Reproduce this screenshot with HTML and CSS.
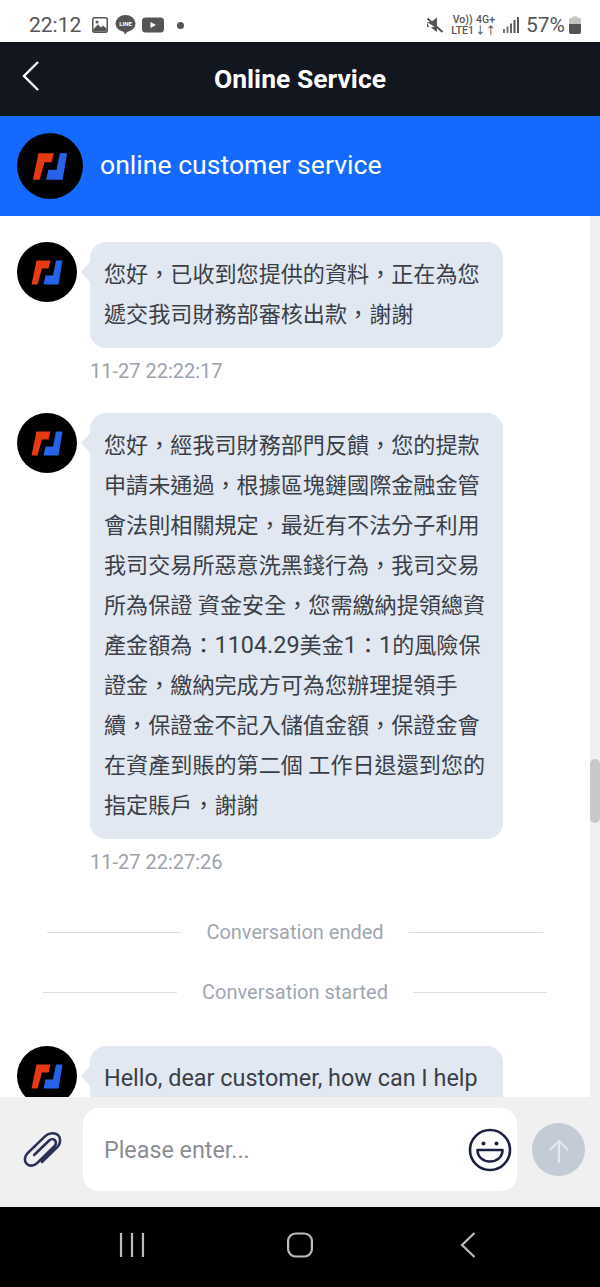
FILE: index.html
```html
<!DOCTYPE html>
<html lang="en">

<head>
    <meta charset="UTF-8">
    <meta name="viewport" content="width=device-width, initial-scale=1.0">
    <title>Online Service</title>
    <link rel="stylesheet" href="styles.css">
</head>

<body>
    <svg class="defs" width="0" height="0">
        <symbol id="logo" viewBox="0 0 60 60">
            <circle cx="30" cy="30" r="30" fill="#000"/>
            <path d="M19.500 18.500H33.500L31.500 26.500H25L20.500 42.500H14.500Z" fill="#e63a12"/>
            <path d="M39 18.500H45.500L41.500 42.500H26.500L28.500 33.500H36Z" fill="#2563eb"/>
        </symbol>
    </svg>

    <div class="status-bar">
        <div class="status-left">
            <span class="clock">22:12</span>
            <svg class="status-icon" width="18" height="18" viewBox="0 0 18 18">
                <rect x="1" y="1" width="16" height="16" rx="2.500" fill="#555"/>
                <rect x="2.500" y="2.500" width="13" height="13" rx="1" fill="#fff"/>
                <path d="M2.500 13L7 8.500L10 11.500L12 9.500L15.500 12.500V15.500H2.500Z" fill="#555"/>
                <circle cx="6" cy="6" r="1.500" fill="#555"/>
            </svg>
            <svg class="status-icon" width="21" height="20" viewBox="0 0 21 20">
                <ellipse cx="10.500" cy="8.500" rx="10" ry="8.500" fill="#555"/>
                <path d="M8 15H14L10 19.500Z" fill="#555"/>
                <text x="10.500" y="10.500" class="line-label">LINE</text>
            </svg>
            <svg class="status-icon" width="22" height="16" viewBox="0 0 22 16">
                <rect x="0" y="0.500" width="22" height="15" rx="3.500" fill="#555"/>
                <path d="M8.500 5L14 8L8.500 11Z" fill="#fff"/>
            </svg>
            <span class="status-dot"></span>
        </div>
        <div class="status-right">
            <svg width="18" height="18" viewBox="0 0 18 18">
                <path d="M1 6H5L11 1.500V12.500M1 6V11H3" fill="#555"/>
                <path d="M5 11.500L11 16V10Z" fill="#555"/>
                <path d="M1.500 2.500L16.500 16" stroke="#555" stroke-width="2" fill="none"/>
            </svg>
            <div class="net-label net-label-vo">
                <span>Vo))</span>
                <span>LTE1</span>
            </div>
            <div class="net-label">
                <span>4G+</span>
                <span>↓↑</span>
            </div>
            <svg width="16" height="16" viewBox="0 0 16 16">
                <rect x="0" y="12" width="2" height="4" fill="#777"/>
                <rect x="3.500" y="9.500" width="2" height="6.500" fill="#777"/>
                <rect x="7" y="6.500" width="2" height="9.500" fill="#666"/>
                <rect x="10.500" y="3" width="2" height="13" fill="#555"/>
                <rect x="14" y="0" width="2" height="16" fill="#555"/>
            </svg>
            <span class="battery-pct">57%</span>
            <svg width="12" height="18" viewBox="0 0 12 18">
                <path d="M3.500 0.500H8.500V2H10.500Q12 2 12 3.500V8H0V3.500Q0 2 1.500 2H3.500Z" fill="#c4c4c4"/>
                <path d="M0 8H12V16Q12 18 10 18H2Q0 18 0 16Z" fill="#555"/>
            </svg>
        </div>
    </div>

    <header class="header">
        <svg class="back" width="20" height="32" viewBox="0 0 20 32">
            <path d="M17 2L3 16L17 30" stroke="#fff" stroke-width="2.400" fill="none"/>
        </svg>
        <h1>Online Service</h1>
    </header>

    <div class="agent-bar">
        <svg class="agent-logo" width="66" height="66"><use href="#logo"/></svg>
        <span class="agent-name">online customer service</span>
    </div>

    <div class="chat">
        <div class="messages">
            <div class="message">
                <div class="message-row">
                    <svg class="avatar" width="60" height="60"><use href="#logo"/></svg>
                    <div class="bubble">您好，已收到您提供的資料，正在為您遞交我司財務部審核出款，謝謝</div>
                </div>
                <div class="time">11-27 22:22:17</div>
            </div>

            <div class="message">
                <div class="message-row">
                    <svg class="avatar" width="60" height="60"><use href="#logo"/></svg>
                    <div class="bubble">
                        <div>您好，經我司財務部門反饋，您的提款申請未通過，根據區塊鏈國際金融金管會法則相關規定，最近有不法分子利用我司交易所惡意洗黑錢行為，我司交易所為保證 資金安全，您需繳納提領總資</div>
                        <div>產金額為：<span class="latin">1104.29</span>美金<span class="latin">1</span>：<span class="latin">1</span>的風險保</div>
                        <div>證金，繳納完成方可為您辦理提領手續，保證金不記入儲值金額，保證金會在資產到賬的第二個 工作日退還到您的指定賬戶，謝謝</div>
                    </div>
                </div>
                <div class="time">11-27 22:27:26</div>
            </div>

            <div class="divider divider-ended"><span>Conversation ended</span></div>
            <div class="divider divider-started"><span>Conversation started</span></div>

            <div class="message">
                <div class="message-row">
                    <svg class="avatar" width="60" height="60"><use href="#logo"/></svg>
                    <div class="bubble"><span class="latin">Hello, dear customer, how can I help</span></div>
                </div>
            </div>
        </div>
        <div class="scroll-track"><div class="scroll-thumb"></div></div>
    </div>

    <div class="input-bar">
        <svg class="clip" width="41" height="37" viewBox="0 0 44 40">
            <path d="M14 25L30 9.500C32 7.500 35 7.500 36.500 9C38 10.500 38 13.500 36 15.500L17.500 33.500C14 37 9 37.500 6 34.500C3 31.500 3.500 26.500 7 23L26 4.500C30 .5 37 .5 40 3.500C43 6.500 43 12.500 39 16.500L22.500 32.500" transform="translate(0 1)" stroke="#2b3155" stroke-width="2.800" fill="none" stroke-linecap="round"/>
        </svg>
        <div class="input-box">
            <span class="placeholder">Please enter...</span>
            <svg width="44" height="44" viewBox="0 0 44 44">
                <circle cx="22" cy="22" r="20" stroke="#1c2140" stroke-width="2.600" fill="none"/>
                <circle cx="15.500" cy="15.500" r="2" fill="#1c2140"/>
                <circle cx="28.500" cy="15.500" r="2" fill="#1c2140"/>
                <path d="M9.500 22H34.500C34.500 29 29 33.500 22 33.500C15 33.500 9.500 29 9.500 22Z" stroke="#1c2140" stroke-width="2.600" fill="none" stroke-linejoin="round"/>
            </svg>
        </div>
        <div class="send">
            <svg width="20" height="25" viewBox="0 0 20 25">
                <path d="M10 24V2M1 11L10 2L19 11" stroke="#e4e8ec" stroke-width="2.200" fill="none"/>
            </svg>
        </div>
    </div>

    <nav class="nav-bar">
        <svg width="26" height="26" viewBox="0 0 26 26">
            <path d="M2 1V25M13 1V25M24 1V25" stroke="#bdbdbd" stroke-width="2.200"/>
        </svg>
        <svg class="nav-home" width="26" height="26" viewBox="0 0 26 26">
            <rect x="1.100" y="1.500" width="23.800" height="23" rx="7.500" stroke="#bdbdbd" stroke-width="2.200" fill="none"/>
        </svg>
        <svg width="18" height="28" viewBox="0 0 18 28">
            <path d="M15.500 2L3 14L15.500 26" stroke="#bdbdbd" stroke-width="2.200" fill="none"/>
        </svg>
    </nav>
</body>

</html>
```

FILE: styles.css
```css
* {
    box-sizing: border-box;
    margin: 0;
    padding: 0;
}

body {
    font-family: Roboto, 'Noto Sans CJK TC', sans-serif;
    background-color: #fff;
    height: 100vh;
    display: flex;
    flex-direction: column;
    overflow: hidden;
}

.defs {
    display: none;
}

.status-bar {
    height: 42px;
    padding: 8px 19px 0 29px;
    display: flex;
    justify-content: space-between;
    align-items: center;
    color: #555;
    flex-shrink: 0;
}

.status-left,
.status-right {
    display: flex;
    align-items: center;
}

.clock {
    font-size: 21px;
    margin-right: 10px;
}

.status-icon {
    margin-right: 6px;
}

.line-label {
    font-family: Roboto, sans-serif;
    font-size: 6px;
    font-weight: 700;
    fill: #fff;
    text-anchor: middle;
}

.status-dot {
    width: 7px;
    height: 7px;
    border-radius: 50%;
    background-color: #555;
    margin-left: 7px;
}

.status-right {
    gap: 7px;
}

.net-label {
    display: flex;
    flex-direction: column;
    align-items: center;
    font-size: 10.500px;
    font-weight: 500;
    line-height: 11px;
}

.net-label-vo {
    margin-right: -6px;
}

.battery-pct {
    font-size: 21px;
    margin-right: -3px;
}

.header {
    height: 74px;
    background-color: #12161f;
    position: relative;
    display: flex;
    justify-content: center;
    align-items: center;
    flex-shrink: 0;
}

.header h1 {
    font-size: 26.500px;
    font-weight: 700;
    color: #fff;
    margin-bottom: 2px;
}

.back {
    position: absolute;
    left: 21px;
    top: 18px;
}

.agent-bar {
    height: 100px;
    background-color: #146aff;
    color: #fff;
    padding-left: 17px;
    display: flex;
    align-items: center;
    gap: 17px;
    font-size: 26.600px;
    flex-shrink: 0;
}

.agent-name {
    margin-bottom: 3px;
}

.chat {
    flex: 1;
    min-height: 0;
    display: flex;
    overflow: hidden;
}

.messages {
    flex: 1;
    padding: 26px 87px 0 17px;
}

.message {
    margin-bottom: 30px;
}

.message-row {
    display: flex;
    align-items: flex-start;
    gap: 13px;
}

.avatar {
    flex-shrink: 0;
}

.bubble {
    position: relative;
    flex: 1;
    background-color: #e2e8f1;
    border-radius: 16px;
    padding: 12px 14px 14px;
    font-size: 22.100px;
    line-height: 40px;
    color: #3a3f47;
}

.bubble::before {
    content: "";
    position: absolute;
    left: -9px;
    top: 20px;
    border-top: 10px solid transparent;
    border-bottom: 10px solid transparent;
    border-right: 9px solid #e2e8f1;
}

.latin {
    font-size: 23.400px;
}

.time {
    margin: 11px 0 0 73px;
    font-size: 20px;
    line-height: 24px;
    color: #9aa3ad;
}

.divider {
    margin-right: -70px;
    display: flex;
    justify-content: center;
    align-items: center;
    gap: 25px;
    font-size: 20px;
    line-height: 24px;
    color: #a0a7b0;
}

.divider::before,
.divider::after {
    content: "";
    width: 134px;
    height: 1px;
    background-color: #dde1e6;
}

.divider-ended {
    margin-top: 46px;
}

.divider-started {
    margin-top: 36px;
    margin-bottom: 42px;
}

.scroll-track {
    width: 10px;
    background-color: #f0f0f0;
    position: relative;
    flex-shrink: 0;
}

.scroll-thumb {
    position: absolute;
    top: 543px;
    left: 0;
    width: 10px;
    height: 64px;
    border-radius: 5px;
    background-color: #c8c8c8;
}

.input-bar {
    height: 110px;
    background-color: #f0f0f0;
    padding: 0 15px 5px 21px;
    display: flex;
    align-items: center;
    flex-shrink: 0;
}

.clip {
    flex-shrink: 0;
}

.input-box {
    width: 434px;
    height: 83px;
    margin-left: 21px;
    background-color: #fff;
    border-radius: 16px;
    padding: 0 5px 0 21px;
    display: flex;
    justify-content: space-between;
    align-items: center;
}

.placeholder {
    font-size: 23.300px;
    color: #8a8d91;
}

.send {
    width: 53px;
    height: 53px;
    margin-left: 15px;
    padding-top: 4px;
    border-radius: 50%;
    background-color: #c3ccd6;
    display: flex;
    justify-content: center;
    align-items: center;
}

.nav-bar {
    height: 80px;
    background-color: #000;
    padding: 0 123px 4px 119px;
    display: flex;
    justify-content: space-between;
    align-items: center;
    flex-shrink: 0;
}

.nav-home {
    margin-right: 4px;
}
```
